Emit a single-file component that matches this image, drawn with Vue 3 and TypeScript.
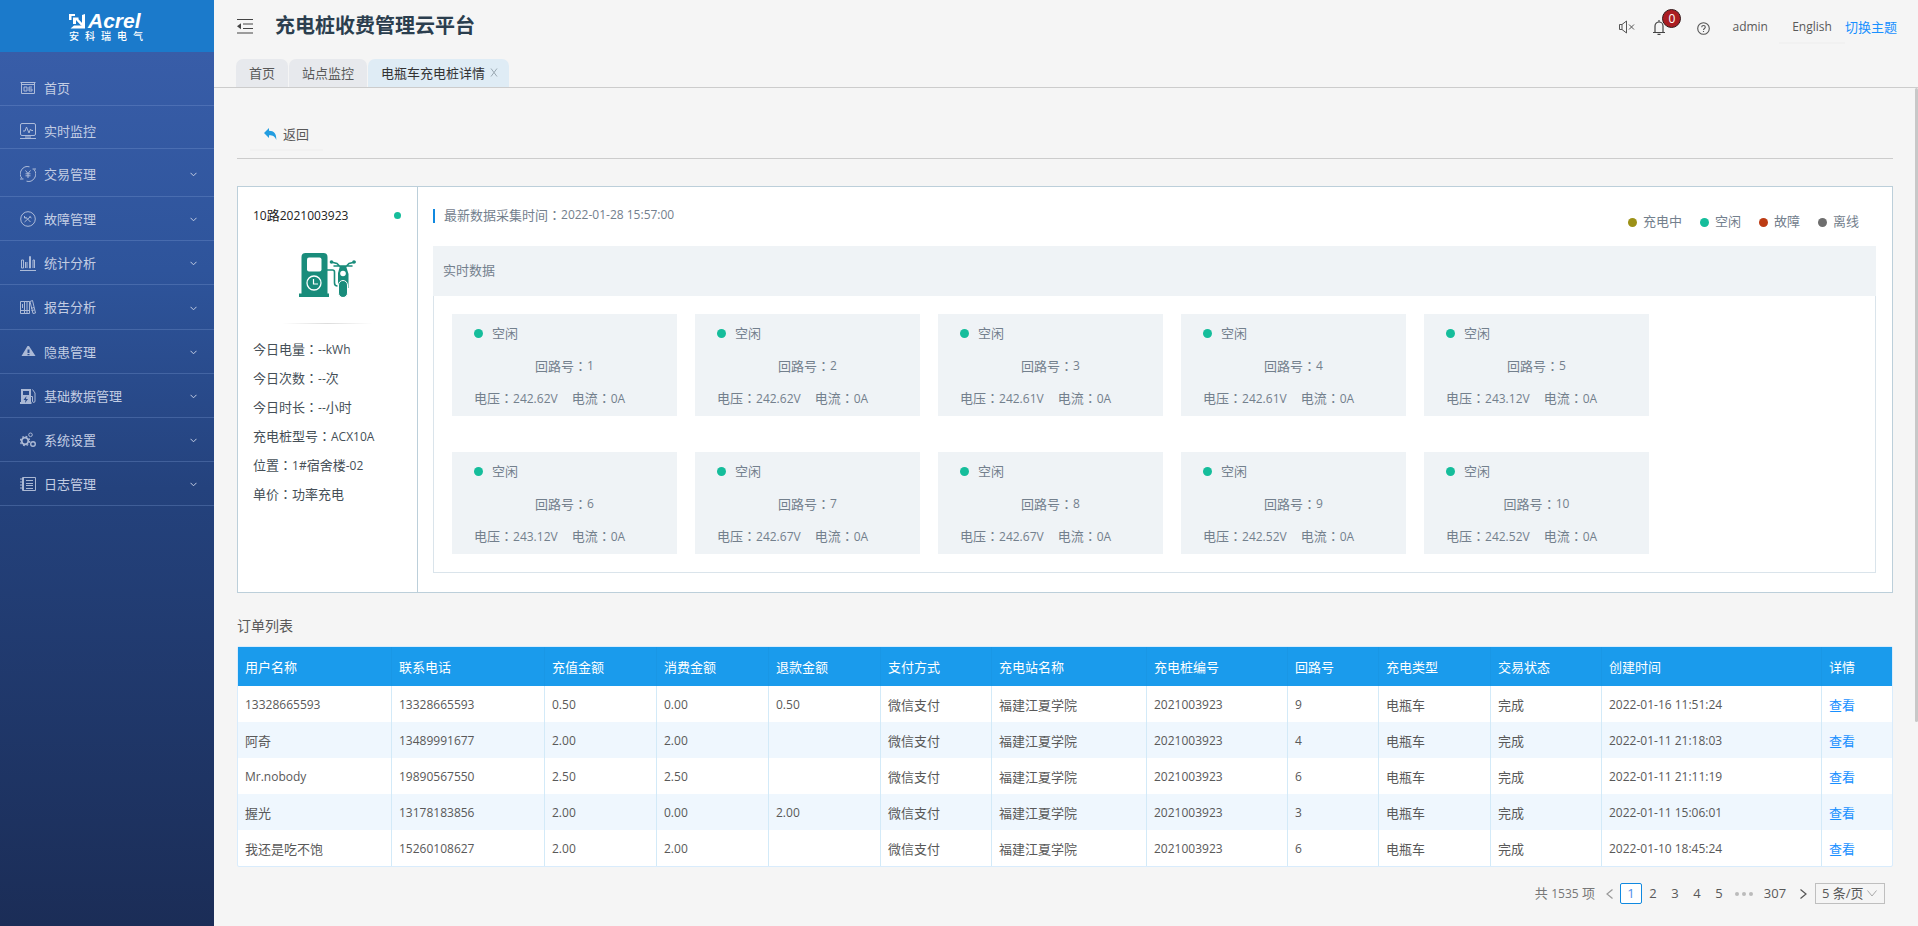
<script setup lang="ts">
import { ref } from 'vue'

interface MenuItem {
  label: string
  icon: string
  size?: 'plain' | 'first'
  children: boolean
}
interface Circuit {
  no: number
  voltage: string
}
interface Order {
  user: string
  phone: string
  charge: string
  spend: string
  refund: string
  circuit: string
  time: string
}

const menu: MenuItem[] = [
  { label: '首页', icon: 'home', size: 'plain', children: false },
  { label: '实时监控', icon: 'monitor', size: 'plain', children: false },
  { label: '交易管理', icon: 'trade', size: 'first', children: true },
  { label: '故障管理', icon: 'fault', children: true },
  { label: '统计分析', icon: 'stats', children: true },
  { label: '报告分析', icon: 'report', children: true },
  { label: '隐患管理', icon: 'danger', children: true },
  { label: '基础数据管理', icon: 'base', children: true },
  { label: '系统设置', icon: 'settings', children: true },
  { label: '日志管理', icon: 'log', children: true },
]

const logoChars = ['安', '科', '瑞', '电', '气']

const info = [
  { label: '今日电量', num: '--kWh', text: '' },
  { label: '今日次数', num: '--', text: '次' },
  { label: '今日时长', num: '--', text: '小时' },
  { label: '充电桩型号', num: 'ACX10A', text: '' },
]

const legend = [
  { label: '充电中', tone: 'charging' },
  { label: '空闲', tone: 'idle' },
  { label: '故障', tone: 'fault' },
  { label: '离线', tone: 'offline' },
]

const circuits: Circuit[] = [
  '242.62V', '242.62V', '242.61V', '242.61V', '243.12V',
  '243.12V', '242.67V', '242.67V', '242.52V', '242.52V',
].map((voltage, i) => ({ no: i + 1, voltage }))

const columns = [
  { title: '用户名称', cls: 'c-user' },
  { title: '联系电话', cls: 'c-phone' },
  { title: '充值金额', cls: 'c-mid' },
  { title: '消费金额', cls: 'c-mid' },
  { title: '退款金额', cls: 'c-mid' },
  { title: '支付方式', cls: 'c-pay' },
  { title: '充电站名称', cls: 'c-station' },
  { title: '充电桩编号', cls: 'c-pile' },
  { title: '回路号', cls: 'c-circuit' },
  { title: '充电类型', cls: 'c-mid' },
  { title: '交易状态', cls: 'c-pay' },
  { title: '创建时间', cls: 'c-time' },
  { title: '详情', cls: 'c-detail' },
]

const orders: Order[] = [
  { user: '13328665593', phone: '13328665593', charge: '0.50', spend: '0.00', refund: '0.50', circuit: '9', time: '2022-01-16 11:51:24' },
  { user: '阿奇', phone: '13489991677', charge: '2.00', spend: '2.00', refund: '', circuit: '4', time: '2022-01-11 21:18:03' },
  { user: 'Mr.nobody', phone: '19890567550', charge: '2.50', spend: '2.50', refund: '', circuit: '6', time: '2022-01-11 21:11:19' },
  { user: '握光', phone: '13178183856', charge: '2.00', spend: '0.00', refund: '2.00', circuit: '3', time: '2022-01-11 15:06:01' },
  { user: '我还是吃不饱', phone: '15260108627', charge: '2.00', spend: '2.00', refund: '', circuit: '6', time: '2022-01-10 18:45:24' },
]

const isLatin = (s: string) => /^[\x20-\x7e]*$/.test(s)
const page = ref(1)
const pageSize = ref('5')
</script>

<template>
  <div class="app">
    <aside class="side">
      <div class="logo">
        <div class="logo-top">
          <svg width="17" height="15" viewBox="0 0 17 15" fill="#fff" aria-hidden="true">
            <path d="M0 0h6v2H2.500v4H0z" />
            <path d="M13 1l3-1v14.500H1.500L5 11.500h8z" />
            <path d="M4 3.500h5.500v1.800L14 10l-1.500 2L7 6v4H4z" />
          </svg>
          <strong class="brand">Acrel</strong>
        </div>
        <div class="logo-cn"><span v-for="c in logoChars" :key="c">{{ c }}</span></div>
      </div>
      <nav class="menu">
        <a v-for="m in menu" :key="m.label" href="#" class="item" :class="m.size">
          <svg class="mi" width="16" height="16" viewBox="0 0 16 16" fill="none" stroke="currentColor" aria-hidden="true">
            <g v-if="m.icon === 'home'">
              <path d="M.500 2.500h15M1.500 2.500v11h13v-11M1 4.500h14" />
              <path d="M4 7h3v4H4zM12 7H9v2h3v2H9M9 9v2" />
            </g>
            <g v-else-if="m.icon === 'monitor'">
              <rect x=".5" y=".5" width="15" height="12" rx="1.5" />
              <path d="M3 8h2l1.500-4 2.500 6 1.500-4 .800 1.500H13" />
              <path d="M0 15.500h16M5 14h6" />
            </g>
            <g v-else-if="m.icon === 'trade'">
              <path d="M9.500.800A7.300 7.300 0 0 0 2 12.500M0 13h3.500M6.500 15.200A7.300 7.300 0 0 0 14 3.500M16 3h-3.500" />
              <path d="M5.500 4.500L8 7.500l2.500-3M8 7.500v4.500M5.500 7.800h5M5.500 9.800h5" />
            </g>
            <g v-else-if="m.icon === 'fault'">
              <circle cx="8" cy="8" r="7.300" />
              <path d="M5.500 6l5 5M10.500 5.500l-6 5.500M4.500 5v2h2M9.500 5.500l2 1.500" />
            </g>
            <g v-else-if="m.icon === 'stats'">
              <path d="M0 15.500h16M1.500 13V5h2v8zM5.500 13V7M7 13V7M9.500 13V1.500h1V13zM13 13V5h1.500v8" />
            </g>
            <g v-else-if="m.icon === 'report'">
              <path d="M.500 2.500h4v12h-4zM4.500 2.500h5v12h-5zM10 2.500l2.500-1 3 12.500-2.500.500zM7 2.500v12M2.500 5v4M0 11.500h9M11 9.500l3-1M11.500 11.500l3-.500" />
            </g>
            <g v-else-if="m.icon === 'danger'">
              <path fill="currentColor" stroke="none" fill-rule="evenodd" d="M8 2h1l6.500 10H1.500L7.500 2zM7.500 5.500v3.500h2V5.500zM7.500 10v1.300h2V10z" />
            </g>
            <g v-else-if="m.icon === 'base'">
              <path fill="currentColor" stroke="none" fill-rule="evenodd" d="M1 1h10v13h.500v2H0v-2h1zM3 3v4h6V3zM6.500 8l-3 4h2l-.500 3 3-4H6z" />
              <path d="M11 8.500h1.500V13c0 2 2.500 2 2.500 0V5l-2.500-3.500" />
            </g>
            <g v-else-if="m.icon === 'settings'">
              <circle cx="5" cy="9" r="3.300" stroke-width="1.800" />
              <circle cx="5" cy="9" r="4.700" stroke-width="1.200" stroke-dasharray="1.800 1.900" />
              <circle cx="10.500" cy="2.800" r="1.800" />
              <circle cx="13" cy="12" r="2.300" stroke-width="1.400" />
            </g>
            <g v-else>
              <path d="M2.500 1.500h13v13h-13zM6 4.500h7M6 7.500h7M6 9.500h7M6 12.500h7M0 3h4M0 6h4M0 9h4M0 12h4M3.500 1.500v13" />
            </g>
          </svg>
          <span class="mt">{{ m.label }}</span>
          <svg v-if="m.children" class="chev" width="7" height="5" viewBox="0 0 7 5" fill="none" stroke="currentColor" aria-hidden="true">
            <path d="M.500.800l3 3 3-3" />
          </svg>
        </a>
      </nav>
    </aside>

    <div class="main">
      <header class="head">
        <div class="head-row">
          <button class="plainbtn" type="button" aria-label="收起菜单">
            <svg width="16" height="15" viewBox="0 0 16 15" aria-hidden="true">
              <path d="M0 .500h16M6 5h10M6 9.500h10M0 14h16" stroke="#444" stroke-width="1.200" fill="none" />
              <path d="M0 7.200l4-3v6z" fill="#444" />
            </svg>
          </button>
          <h1>充电桩收费管理云平台</h1>
          <div class="tools">
            <button class="plainbtn mute" type="button" aria-label="静音">
              <svg width="16" height="14" viewBox="0 0 16 14" fill="none" stroke="#555" aria-hidden="true">
                <path d="M.500 4.500h2.500l4.500-3.500v12L3 9.500H.500zM3 4.500v5M10 4.500l5 5M15 4.500l-5 5" />
              </svg>
            </button>
            <button class="plainbtn bell" type="button" aria-label="通知">
              <svg width="12" height="15" viewBox="0 0 12 15" fill="none" stroke="#444" stroke-width="1.200" aria-hidden="true">
                <path d="M0 12.500h12M2 12.500V6a4 4 0 0 1 8 0v6.500M6 2V0M4.500 14.300h3" />
              </svg>
              <span class="badge">0</span>
            </button>
            <button class="plainbtn help" type="button" aria-label="帮助">
              <svg width="13" height="13" viewBox="0 0 13 13" fill="none" stroke="#555" stroke-width="1.100" aria-hidden="true">
                <circle cx="6.500" cy="6.500" r="5.800" />
                <path d="M4.700 5.200c0-2.300 3.600-2.300 3.600 0C8.300 6.500 6.500 6.400 6.500 8M6.500 8.900v1" />
              </svg>
            </button>
            <span class="admin">admin</span>
            <button class="plainbtn lang" type="button">English</button>
            <a class="theme" href="#">切换主题</a>
          </div>
        </div>
        <div class="tabs">
          <button class="tab" type="button">首页</button>
          <button class="tab" type="button">站点监控</button>
          <button class="tab on" type="button">电瓶车充电桩详情<svg width="8" height="9" viewBox="0 0 8 9" fill="none" stroke="#9aa8b2" aria-hidden="true"><path d="M1 .500l6 8M7 .500l-6 8" /></svg></button>
        </div>
      </header>

      <div class="body">
        <main class="content">
          <div class="back-row">
            <button class="back" type="button">
              <svg width="13" height="12" viewBox="0 0 13 12" fill="#229de0" aria-hidden="true">
                <path d="M5 0v2.800C10 2.800 12.500 5.500 12.300 12 11 8.500 9 7.300 5 7.300V10L0 5z" />
              </svg>
              返回
            </button>
          </div>

          <section class="panel">
            <div class="left">
              <div class="pile"><span><span class="num">10</span>路<span class="num">2021003923</span></span><i class="dot idle small"></i></div>
              <svg class="bike" width="57" height="44" viewBox="0 0 57 44" aria-hidden="true">
                <path fill="#198c7b" d="M2.500 4a4 4 0 0 1 4-4h18a4 4 0 0 1 4 4v36.500h1.500V44H0v-3.500h2.500z" />
                <rect x="8" y="4.500" width="14.500" height="14" rx="2" fill="#fff" />
                <circle cx="15" cy="30" r="7" fill="none" stroke="#fff" stroke-width="1.300" />
                <path d="M14.500 26v5H19" fill="none" stroke="#fff" stroke-width="1.200" />
                <path d="M28 17h5.500a2 2 0 0 1 2 2v11c0 2 1 3 3 3" fill="none" stroke="#198c7b" stroke-width="1.600" />
                <path d="M32 9l6 1.500 3 3h6l3-3L56 9M35 13h18" fill="none" stroke="#198c7b" stroke-width="1.500" stroke-linecap="round" />
                <circle cx="32.500" cy="9" r="1.800" fill="#198c7b" /><circle cx="55" cy="9" r="1.800" fill="#198c7b" />
                <path fill="#198c7b" d="M41 13h6l2.500 8v14h-10.500V20z" />
                <circle cx="44" cy="20.500" r="2.800" fill="#fff" />
                <rect x="39.500" y="27.500" width="9" height="17" rx="4.500" fill="#198c7b" stroke="#fff" />
              </svg>
              <div class="rule"></div>
              <div class="lines">
                <div v-for="r in info" :key="r.label" class="line">{{ r.label }}<span class="colon">：</span><span class="num">{{ r.num }}</span>{{ r.text }}</div>
                <div class="line">位置<span class="colon">：</span><span class="num">1#</span>宿舍楼<span class="num">-02</span></div>
                <div class="line">单价<span class="colon">：</span>功率充电</div>
              </div>
            </div>

            <div class="right">
              <div class="bar">
                <div class="stamp">最新数据采集时间<span class="colon">：</span><span class="num">2022-01-28 15:57:00</span></div>
                <div class="legend">
                  <span v-for="l in legend" :key="l.label" class="lg"><i class="dot" :class="l.tone"></i>{{ l.label }}</span>
                </div>
              </div>
              <div class="box">
                <h2>实时数据</h2>
                <div class="cards">
                  <article v-for="c in circuits" :key="c.no" class="card">
                    <div class="row state"><i class="dot idle"></i>空闲</div>
                    <div class="row center">回路号<span class="colon">：</span><span class="num">{{ c.no }}</span></div>
                    <div class="row pair">
                      <span>电压<span class="colon">：</span><span class="num">{{ c.voltage }}</span></span>
                      <span>电流<span class="colon">：</span><span class="num">0A</span></span>
                    </div>
                  </article>
                </div>
              </div>
            </div>
          </section>

          <h2 class="list-title">订单列表</h2>
          <table>
            <colgroup><col v-for="c in columns" :key="c.title" :class="c.cls" /></colgroup>
            <thead>
              <tr><th v-for="c in columns" :key="c.title" scope="col">{{ c.title }}</th></tr>
            </thead>
            <tbody>
              <tr v-for="o in orders" :key="o.time">
                <td :class="{ num: isLatin(o.user) }">{{ o.user }}</td>
                <td class="num">{{ o.phone }}</td>
                <td class="num">{{ o.charge }}</td>
                <td class="num">{{ o.spend }}</td>
                <td class="num">{{ o.refund }}</td>
                <td>微信支付</td>
                <td>福建江夏学院</td>
                <td class="num">2021003923</td>
                <td class="num">{{ o.circuit }}</td>
                <td>电瓶车</td>
                <td>完成</td>
                <td class="num">{{ o.time }}</td>
                <td><a href="#">查看</a></td>
              </tr>
            </tbody>
          </table>

          <div class="pager">
            <span class="total">共 <span class="num">1535</span> 项</span>
            <button class="pg" type="button" aria-label="上一页">
              <svg width="7" height="10" viewBox="0 0 7 10" fill="none" stroke="#999" stroke-width="1.200"><path d="M6.500.500L1 5l5.500 4.500" /></svg>
            </button>
            <button v-for="n in 5" :key="n" class="pg" :class="{ cur: n === page }" type="button" @click="page = n">{{ n }}</button>
            <span class="dots"><i></i><i></i><i></i></span>
            <button class="pg wide" type="button">307</button>
            <button class="pg" type="button" aria-label="下一页">
              <svg width="7" height="10" viewBox="0 0 7 10" fill="none" stroke="#555" stroke-width="1.200"><path d="M.500.500L6 5 .500 9.500" /></svg>
            </button>
            <span class="size">
              <select v-model="pageSize" aria-label="每页条数">
                <option value="5">5 条/页</option>
                <option value="10">10 条/页</option>
              </select>
              <svg width="10" height="7" viewBox="0 0 10 7" fill="none" stroke="#aaa" aria-hidden="true"><path d="M.500.500L5 6 9.500.500" /></svg>
            </span>
          </div>
        </main>
        <div class="track"><div class="thumb"></div></div>
      </div>
    </div>
  </div>
</template>

<style>
html, body { background: #f5f5f5; }
body { margin: 0; }
</style>

<style scoped>
.app {
  display: flex;
  min-height: 100vh;
  font-family: "Open Sans", "Noto Sans CJK SC", sans-serif;
  font-size: 13px;
  line-height: 20px;
  color: #595959;
  background: #f5f5f5;
}
.app * { box-sizing: border-box; }
button, select { font: inherit; color: inherit; cursor: pointer; }
a { text-decoration: none; color: #1890ff; }
h1, h2 { margin: 0; }
svg { display: block; flex: none; }
.num { font-size: 12px; }
.colon { font-family: "Noto Sans CJK TC", sans-serif; }

.side { width: 214px; flex: none; display: flex; flex-direction: column; background: #1c2e58; }
.logo { height: 52px; background: #1b7acb; color: #fff; padding: 12px 71px 0 69px; }
.logo-top { display: flex; align-items: center; gap: 2px; height: 18px; }
.brand { font-family: "Liberation Sans", sans-serif; font-size: 21px; font-style: italic; line-height: 18px; }
.logo-cn { display: flex; justify-content: space-between; font-size: 10px; line-height: 12px; font-weight: 500; }
.menu { flex: 1; padding-top: 11px; background: linear-gradient(#385da8, #2e549b 25%, #24427d 50%, #1b2d57); }
.item {
  display: flex;
  align-items: center;
  height: 44px;
  padding: 0 17px 0 20px;
  border-bottom: 1px solid rgba(125, 155, 210, 0.32);
  color: #c3cde3;
}
.item.plain { height: 43px; padding-top: 7px; }
.item.first { height: 48px; padding-top: 2px; }
.item:nth-child(6) { height: 45px; }
.mi { opacity: 0.85; }
.mt { margin-left: 8px; flex: 1; }
.chev { margin-top: 2px; }

.main { flex: 1; min-width: 0; display: flex; flex-direction: column; }
.head { height: 88px; border-bottom: 1px solid #ccc; display: flex; flex-direction: column; justify-content: space-between; }
.head-row { display: flex; align-items: center; height: 52px; padding: 0 21px 0 23px; }
.plainbtn { border: 0; background: none; padding: 0; }
h1 { margin-left: 22px; flex: 1; font-size: 20px; line-height: 28px; color: #2b3e4e; font-weight: 700; }
.tools { display: flex; align-items: center; padding-top: 2px; }
.bell { position: relative; margin-left: 18px; }
.badge {
  position: absolute;
  left: 9px;
  top: -11px;
  width: 19px;
  height: 19px;
  border: 1px solid #33191b;
  border-radius: 50%;
  background: #aa1d22;
  color: #fff;
  font-size: 12px;
  line-height: 17px;
}
.help { margin-left: 32px; padding-top: 2px; }
.admin { margin-left: 22px; font-size: 12px; }
.lang { margin-left: 11px; width: 66px; height: 30px; font-size: 12px; box-shadow: 0 2px 0 rgba(0, 0, 0, 0.016); }

.tabs { display: flex; gap: 1px; padding-left: 22px; }
.tab {
  display: flex;
  align-items: center;
  height: 28px;
  padding: 0 13px 1px;
  border: 0;
  border-radius: 7px 7px 0 0;
  background: #e7e9ed;
}
.tab.on { background: #dfecf5; color: #333; gap: 5px; padding-right: 11px; }

.body { flex: 1; display: flex; }
.content { flex: 1; min-width: 0; padding: 26px 22px 20px 23px; }
.track { width: 3px; }
.thumb { height: 634px; border-radius: 2px; background: #c8c8c8; }

.back-row { height: 45px; padding: 5px 13px 0; border-bottom: 1px solid #ccc; }
.back { display: flex; align-items: center; gap: 6px; height: 30px; padding: 0 14px; border: 0; background: none; box-shadow: 0 2px 0 rgba(0, 0, 0, 0.016); }

.panel { display: flex; margin-top: 27px; border: 1px solid #bccfda; background: #fff; }
.left { width: 180px; flex: none; padding: 18px 15px 0; border-right: 1px solid #bccfda; color: #454f57; }
.pile { display: flex; align-items: center; justify-content: space-between; color: #222; padding-right: 1px; }
.bike { margin: 27px 0 26px 46px; }
.rule { height: 1px; margin: 0 29px; background: linear-gradient(90deg, transparent, #ddd, transparent); }
.lines { padding-top: 10px; }
.line { line-height: 29px; height: 29px; white-space: nowrap; }
.dot { display: inline-block; flex: none; width: 9px; height: 9px; border-radius: 50%; }
.dot.small { width: 7px; height: 7px; }
.dot.idle { background: #15bd9b; }
.dot.charging { background: #9c9117; }
.dot.fault { background: #bd3c14; }
.dot.offline { background: #6e6e6e; }

.right { flex: 1; min-width: 0; padding: 16px 16px 19px 15px; color: #73808d; }
.bar { display: flex; justify-content: space-between; height: 43px; }
.stamp { display: flex; align-items: center; height: 24px; }
.stamp::before { content: ""; width: 2px; height: 14px; margin: 2px 9px 0 0; background: #1089e0; }
.legend { display: flex; align-items: center; gap: 18px; height: 36px; padding-right: 17px; }
.lg { display: flex; align-items: center; gap: 6px; }
.lg .dot, .row .dot { margin-top: 2px; }
.box h2 { padding: 0 10px 2px; font-size: 13px; line-height: 48px; font-weight: 400; background: #eff3f6; }
.cards {
  display: grid;
  grid-template-columns: repeat(auto-fill, 225px);
  gap: 36px 18px;
  padding: 18px;
  border: 1px solid #dae4eb;
  border-top: 0;
}
.card { padding: 2px 22px 1px; background: #eff3f6; }
.row { display: flex; align-items: center; height: 33px; }
.state { gap: 9px; }
.center { justify-content: center; }
.pair { gap: 14px; }

.list-title { margin: 22px 0 9px; font-size: 14px; line-height: 22px; font-weight: 400; }
table {
  width: 100%;
  table-layout: fixed;
  border-collapse: separate;
  border-spacing: 0;
  border: 1px solid #d9ecfc;
  border-radius: 2px;
  background: #fff;
}
.c-user { width: 154px; }
.c-phone { width: 153px; }
.c-mid { width: 112px; }
.c-pay { width: 111px; }
.c-station { width: 155px; }
.c-pile { width: 141px; }
.c-circuit { width: 91px; }
.c-time { width: 220px; }
.c-detail { width: 70px; }
th, td { text-align: left; font-weight: 400; padding: 0 8px 0 7px; border-right: 1px solid #d3eaf8; white-space: nowrap; overflow: hidden; }
th { height: 39px; background: #1a9bec; border-color: #1997e6; color: #fff; }
td { height: 36px; padding-top: 1px; }
th:last-child, td:last-child { border-right: 0; }
tbody tr:nth-child(even) { background: #eff7fe; }

.pager { display: flex; align-items: center; justify-content: flex-end; margin-top: 16px; padding-right: 8px; height: 21px; }
.total { margin-right: 3px; color: #777; }
.pg { display: flex; align-items: center; justify-content: center; width: 22px; height: 21px; padding: 0; border: 0; border-radius: 2px; background: none; line-height: 19px; }
.pg.cur { border: 1px solid #1089e0; background: #fff; color: #4f8de8; }
.pg.wide { width: 34px; }
.dots { display: flex; justify-content: center; gap: 3px; width: 28px; }
.dots i { width: 4px; height: 4px; border-radius: 50%; background: #bbb; }
.size { position: relative; margin-left: 1px; }
.size select { display: block; appearance: none; width: 70px; height: 21px; padding: 0 0 0 6px; border: 1px solid #bfbfbf; border-radius: 0; background: transparent; line-height: 19px; }
.size svg { position: absolute; right: 8px; top: 7px; pointer-events: none; }
</style>
